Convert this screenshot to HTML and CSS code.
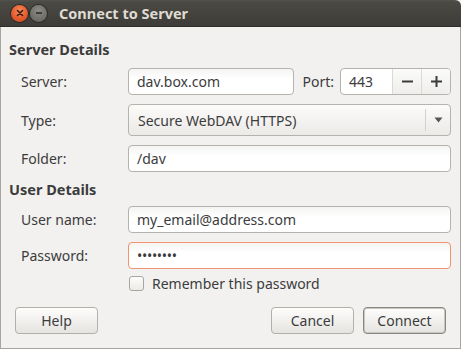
FILE: index.html
```html
<!DOCTYPE html>
<html lang="en">
<head>
    <meta charset="UTF-8">
    <title>Connect to Server</title>
    <link rel="stylesheet" href="styles.css">
</head>
<body>
    <div class="window">
        <header class="titlebar">
            <div class="win-buttons">
                <span class="win-btn close">
                    <svg width="8" height="8" viewBox="0 0 8 8"><path d="M1.5 1.5 L6.5 6.5 M6.5 1.5 L1.5 6.5" stroke="#3a1a0c" stroke-width="1.6" stroke-linecap="round"/></svg>
                </span>
                <span class="win-btn minimize">
                    <svg width="8" height="8" viewBox="0 0 8 8"><path d="M1 4 H7" stroke="#2e2d2a" stroke-width="1.6"/></svg>
                </span>
            </div>
            <div class="title">Connect to Server</div>
        </header>
        <main class="content">
            <h2 class="section-title">Server Details</h2>
            <div class="form-grid">
                <label>Server:</label>
                <div class="server-row">
                    <div class="entry grow">dav.box.com</div>
                    <label class="port-label">Port:</label>
                    <div class="spin">
                        <span class="spin-value">443</span>
                        <span class="spin-btn"><svg width="11" height="11" viewBox="0 0 11 11"><path d="M0 5.5 H11" stroke="#3c3c3c" stroke-width="2"/></svg></span>
                        <span class="spin-btn"><svg width="11" height="11" viewBox="0 0 11 11"><path d="M0 5.5 H11 M5.5 0 V11" stroke="#3c3c3c" stroke-width="2"/></svg></span>
                    </div>
                </div>
                <label>Type:</label>
                <div class="combo">
                    <span class="combo-text">Secure WebDAV (HTTPS)</span>
                    <span class="combo-arrow"><svg width="9" height="6" viewBox="0 0 9 6"><path d="M0.5 0.5 H8.5 L4.5 5.5 Z" fill="#555"/></svg></span>
                </div>
                <label>Folder:</label>
                <div class="entry">/dav</div>
            </div>
            <h2 class="section-title second">User Details</h2>
            <div class="form-grid">
                <label>User name:</label>
                <div class="entry">my_email@address.com</div>
                <label>Password:</label>
                <div class="entry focused dots">&bull;&bull;&bull;&bull;&bull;&bull;&bull;&bull;</div>
                <span></span>
                <div class="check-row">
                    <span class="checkbox"></span>
                    <span>Remember this password</span>
                </div>
            </div>
            <div class="actions">
                <button class="btn">Help</button>
                <div class="actions-right">
                    <button class="btn">Cancel</button>
                    <button class="btn default">Connect</button>
                </div>
            </div>
        </main>
    </div>
</body>
</html>
```
FILE: styles.css
```css
* {
    margin: 0;
    padding: 0;
    box-sizing: border-box;
}
body {
    font-family: 'Noto Sans', 'DejaVu Sans', sans-serif;
    font-size: 14px;
    color: #3c3c3c;
    background: #f2f1f0;
    width: 461px;
    height: 349px;
    overflow: hidden;
}
.window { width: 461px; height: 349px; border: 1px solid #a8a49f; border-top: none; border-top-right-radius: 6px; background: #f2f1f0; display: flex; flex-direction: column; }
.titlebar { height: 27px; margin: 0 -1px; background: linear-gradient(#55534e 0, #4a4944 2px, #3d3c38 100%); border-top-right-radius: 6px; border-bottom: 1px solid #2f2e2b; display: flex; align-items: center; }
.win-buttons { display: flex; gap: 2px; padding-left: 11px; }
.win-btn { width: 17px; height: 17px; border-radius: 50%; display: flex; align-items: center; justify-content: center; }
.win-btn.close { background: radial-gradient(circle at 50% 35%, #f58a5c 0%, #e2582a 60%, #c8461d 100%); box-shadow: 0 0 0 1px #2b2a27; }
.win-btn.minimize { background: radial-gradient(circle at 50% 35%, #8d8b85 0%, #6d6b66 70%, #5a5954 100%); box-shadow: 0 0 0 1px #2b2a27; }
.title { margin-left: 12px; font-weight: 700; font-size: 14.5px; color: #dfdbd2; }
.content { flex: 1; padding: 12px 9px 14px 8px; display: flex; flex-direction: column; }
.section-title { font-size: 14.5px; font-weight: 700; color: #3c3c3c; height: 20px; line-height: 20px; margin-bottom: 9px; }
.section-title.second { margin-top: 7px; margin-bottom: 7px; }
.form-grid { display: grid; grid-template-columns: 107px 1fr; row-gap: 9px; align-items: center; padding-left: 12px; }
.server-row { display: flex; align-items: center; }
.grow { flex: 1; }
.port-label { margin: 0 6px 0 8px; }
.entry { height: 27px; line-height: 25px; padding: 0 8px; border: 1px solid #b6b2ad; border-radius: 4px; background: linear-gradient(#f4f4f3, #ffffff 40%); color: #3c3c3c; }
.entry.focused { border-color: #f0936e; }
.entry.dots { font-size: 14px; letter-spacing: -0.3px; }
.spin { width: 111px; height: 27px; display: flex; border: 1px solid #b6b2ad; border-radius: 4px; background: #fff; overflow: hidden; }
.spin-value { flex: 1; padding-left: 8px; line-height: 25px; }
.spin-btn { width: 29px; display: flex; align-items: center; justify-content: center; border-left: 1px solid #dcdad6; background: linear-gradient(#fbfbfa, #efeeec); }
.combo { height: 32px; display: flex; align-items: center; border: 1px solid #b6b2ad; border-radius: 4px; background: linear-gradient(#fbfbfa, #eceae7); }
.combo-text { flex: 1; padding-left: 9px; }
.combo-arrow { width: 25px; height: 22px; border-left: 1px solid #d4d1cc; display: flex; align-items: center; justify-content: center; }
.check-row { display: flex; align-items: center; gap: 8px; height: 16px; margin-top: -3px; padding-left: 1px; }
.checkbox { width: 15px; height: 15px; border: 1px solid #a9a59f; border-radius: 3px; background: linear-gradient(#fdfdfd, #eceae7); }
.actions { margin-top: auto; display: flex; justify-content: space-between; padding-left: 6px; }
.actions-right { display: flex; gap: 9px; padding-right: 5px; }
.btn { width: 83px; height: 27px; font-family: inherit; font-size: 14px; color: #3c3c3c; border: 1px solid #b3afa9; border-radius: 4px; background: linear-gradient(#fdfdfc, #e6e4e1); }
.btn.default { border: 1px solid #8a8680; box-shadow: inset 0 0 0 1px #c9c6c1; }
```
